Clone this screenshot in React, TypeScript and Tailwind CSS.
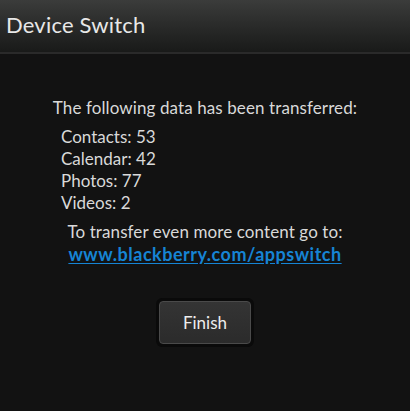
export default function App() {
  const items = [
    { label: 'Contacts', value: 53 },
    { label: 'Calendar', value: 42 },
    { label: 'Photos', value: 77 },
    { label: 'Videos', value: 2 },
  ]

  return (
    <div className="w-[410px] h-[411px] bg-[#121212] flex flex-col font-['Lato','Liberation_Sans',sans-serif]">
      {/* Title bar */}
      <div className="h-[54px] shrink-0 bg-gradient-to-b from-[#3b3c3b] to-[#191a19] border-b-2 border-[#2a2a2a] flex items-center pl-[6px] pb-[2px]">
        <h1 className="text-[22px] tracking-[0.2px] text-[#e8e8e8] leading-none">Device Switch</h1>
      </div>

      {/* Summary */}
      <div className="flex flex-col items-center pt-[43px] text-[#d9d9d9] text-[17px] leading-[22px]">
        <p className="tracking-[0.1px]">The following data has been transferred:</p>
        <ul className="self-start pl-[61px] mt-[7px]">
          {items.map((item) => (
            <li key={item.label}>
              {item.label}: {item.value}
            </li>
          ))}
        </ul>
        <p className="mt-[7px] tracking-[0.1px]">To transfer even more content go to:</p>
        <a
          href="#"
          className="font-bold text-[18px] tracking-[0.5px] text-[#1684d4] underline underline-offset-2"
        >
          www.blackberry.com/appswitch
        </a>

        <div className="mt-[33px] rounded-[6px] bg-[#0a0a0a] p-[3px]">
          <button className="w-[92px] h-[43px] rounded-[4px] border border-[#4a4a4a] bg-gradient-to-b from-[#343434] to-[#2b2b2b] text-[#ededed] text-[17px]">
            Finish
          </button>
        </div>
      </div>
    </div>
  )
}
